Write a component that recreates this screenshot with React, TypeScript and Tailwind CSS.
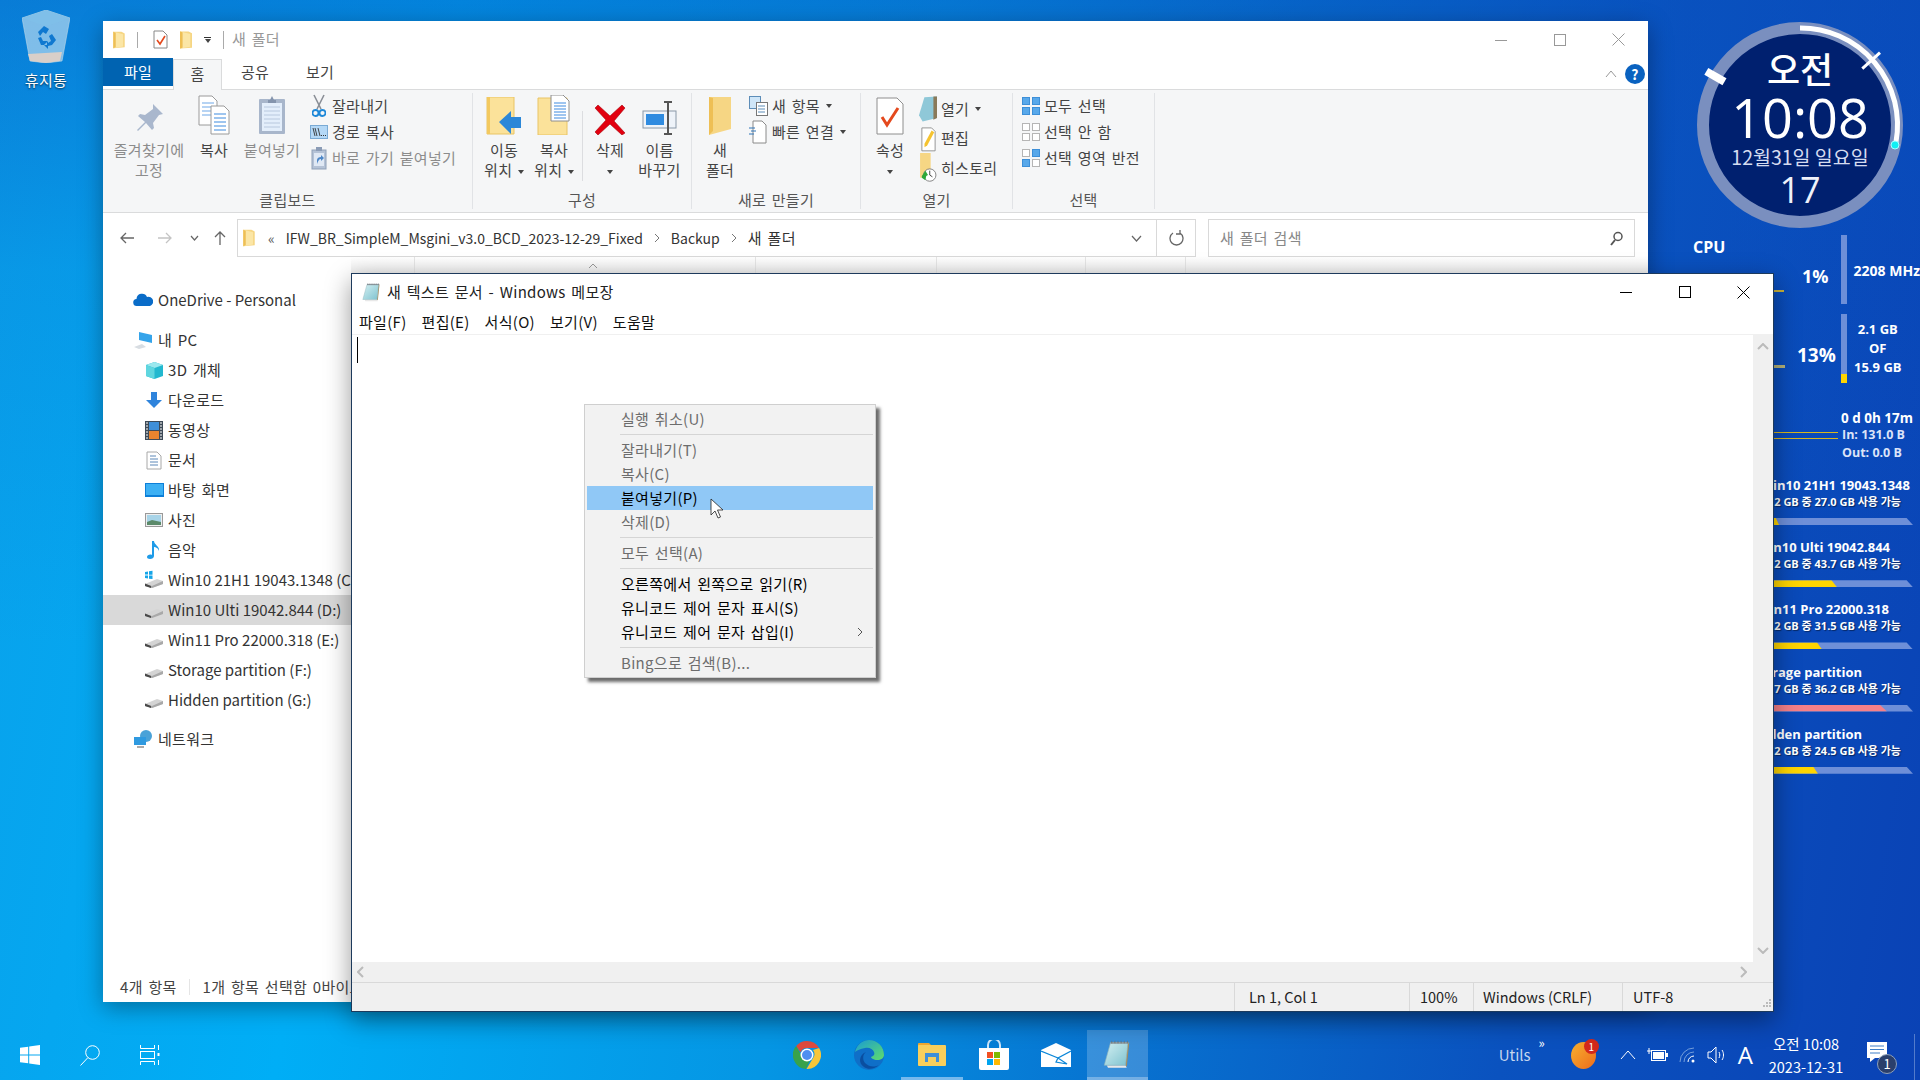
import React from 'react';

const latin = 'tracking-normal [word-spacing:normal]';

// ---------- small drawn icons ----------

function FolderIcon({ w = 14, h = 22 }: { w?: number; h?: number }) {
  return (
    <svg width={w} height={h} viewBox="0 0 14 22">
      <path d="M0 1h10l4 2v17l-14 1z" fill="#f6d684" />
      <path d="M0 1l12 3v15l-12 2z" fill="#fbe6a6" />
      <path d="M0 1v20l3-1v-18z" fill="#eebf55" />
    </svg>
  );
}

function NotepadIcon({ size = 20, id = 'np' }: { size?: number; id?: string }) {
  return (
    <svg width={size} height={size} viewBox="0 0 24 24">
      <defs>
        <linearGradient id={id} x1="0" y1="0" x2="1" y2="1">
          <stop offset="0" stopColor="#d4f0f2" />
          <stop offset="1" stopColor="#7ec2cf" />
        </linearGradient>
      </defs>
      <path d="M3 21h15l1 2H4z" fill="#e8e8e8" />
      <path d="M19 3h2l-2 19-1-1z" fill="#a88a55" />
      <path d="M6 3h14l-2 18H1z" fill={`url(#${id})`} stroke="#8fb4bc" strokeWidth="0.500" />
      <path d="M6 2.500h14.500v1.300H6z" fill="#8f9aa0" />
      <path d="M7 1.500v2M9.500 1.500v2M12 1.500v2M14.500 1.500v2M17 1.500v2M19.500 1.500v2" stroke="#6c767c" strokeWidth="0.700" />
    </svg>
  );
}

function DriveIcon({ flag = false }: { flag?: boolean }) {
  return (
    <svg width="20" height="20" viewBox="0 0 20 20">
      {flag && (
        <g fill="#16a5e8">
          <path d="M1 2l3-.5v3H1zM5 1.300l3.500-.6v4H5zM1 5.500h3v3l-3-.4zM5 5.500h3.500v3.600L5 8.700z" />
        </g>
      )}
      <path d="M1 14l12-5 6 2v3l-11 4-7-2z" fill="#d4d4d4" />
      <path d="M1 14l7 2 11-5v3l-11 4-7-2z" fill="#a9a9a9" />
      <path d="M1 13.500l6 2.500v2l-6-2z" fill="#4a4a4a" />
    </svg>
  );
}

function SmallCaret() {
  return <span className="inline-block w-0 h-0 border-x-[3px] border-x-transparent border-t-[4px] border-t-[#444] align-middle" />;
}

function PathChevron() {
  return (
    <svg className="mx-[11px]" width="6" height="10" viewBox="0 0 6 10" fill="none">
      <path d="M1 1l4 4-4 4" stroke="#777" />
    </svg>
  );
}

const pinIcon = (
  <svg width="34" height="34" viewBox="0 0 34 34">
    <path d="M21 3l10 10-4 1-6 8 1 5-2 2-6-7-8 8-1-1 8-8-7-6 2-2 5 1 8-6z" fill="#a9b7cd" />
  </svg>
);

const copyIcon = (
  <svg width="32" height="40" viewBox="0 0 32 40">
    <path d="M1 1h13l5 5v24H1z" fill="#fff" stroke="#9a9a9a" />
    <path d="M4 8h12M4 12h12M4 16h12M4 20h12" stroke="#6fa8e8" strokeWidth="1.200" />
    <path d="M13 11h13l5 5v23H13z" fill="#fff" stroke="#9a9a9a" />
    <path d="M16 19h12M16 23h12M16 27h12M16 31h12M16 35h12" stroke="#3f8be0" strokeWidth="1.200" />
  </svg>
);

const pasteIcon = (
  <svg width="28" height="40" viewBox="0 0 28 40">
    <rect x="1" y="4" width="26" height="35" rx="1" fill="#a8b6cb" />
    <rect x="4" y="8" width="20" height="28" fill="#e3eefb" />
    <path d="M6 12h16M6 16h16M6 20h16M6 24h16M6 28h16M6 32h16" stroke="#b8c8de" />
    <path d="M10 5h2l2-4 2 4h2v3h-8z" fill="#8494ad" />
  </svg>
);

const scissorsIcon = (
  <svg width="14" height="24" viewBox="0 0 14 24" fill="none">
    <path d="M2 1l7 14M12 1L5 15" stroke="#8a8f96" strokeWidth="1.600" />
    <circle cx="3.500" cy="19" r="3" stroke="#1e88d8" strokeWidth="1.800" />
    <circle cx="10.500" cy="19" r="3" stroke="#1e88d8" strokeWidth="1.800" />
  </svg>
);

const pathIcon = (
  <svg width="18" height="14" viewBox="0 0 18 14">
    <rect x="0.500" y="0.500" width="17" height="13" fill="#b4d8f6" stroke="#7aaad4" />
    <path d="M3 3l2 8M5 3l2 8M8 3l2 8" stroke="#333" strokeWidth="0.900" />
    <path d="M11 10.500h1M13 10.500h1M15 10.500h1" stroke="#333" />
  </svg>
);

const shortcutIcon = (
  <svg width="16" height="24" viewBox="0 0 16 24">
    <rect x="1" y="4" width="14" height="19" fill="#b4c2d6" stroke="#8fa0b8" />
    <rect x="5" y="1" width="6" height="4" fill="#8b9cb6" />
    <rect x="3" y="7" width="10" height="13" fill="#dfe8f4" />
    <path d="M6 18v-4c0-2 2-3 4-3v-2l3 3-3 3v-2c-2 0-3 2-4 5z" fill="#4d87c7" />
  </svg>
);

const moveToIcon = (
  <svg width="36" height="38" viewBox="0 0 36 38">
    <path d="M1 0h27v37H1z" fill="#fbe29a" stroke="#e9c465" />
    <path d="M1 0l3 0v37H1z" fill="#f3c95f" />
    <path d="M13 29l12-11v6h10v11H25v6z" transform="translate(0,-4)" fill="#2b87d8" />
  </svg>
);

const copyToIcon = (
  <svg width="34" height="40" viewBox="0 0 34 40">
    <path d="M1 3h29v37H1z" fill="#fbe29a" stroke="#e9c465" />
    <path d="M14 0h12l6 6v20H14z" fill="#fff" stroke="#8e8e8e" />
    <path d="M17 8h12M17 11h12M17 14h12M17 17h12M17 20h12M17 23h12" stroke="#3f8be0" />
  </svg>
);

const deleteIcon = (
  <svg width="32" height="32" viewBox="0 0 32 32">
    <path d="M4 2l12 11L28 2l3 3-11 13 11 12-3 2-12-11L4 32l-3-3 11-12L1 5z" fill="#e2000f" stroke="#a80008" strokeWidth="0.600" />
  </svg>
);

const renameIcon = (
  <svg width="36" height="34" viewBox="0 0 36 34" fill="none">
    <rect x="1" y="10" width="33" height="17" fill="#eef3f9" stroke="#8a98a8" />
    <rect x="4" y="13" width="18" height="11" fill="#2f8be0" />
    <path d="M26 1v32M22 1h8M22 33h8" stroke="#555" strokeWidth="2" />
  </svg>
);

const newFolderIcon = (
  <svg width="24" height="38" viewBox="0 0 24 38">
    <path d="M1 0h22v32L1 38z" fill="#f6d684" />
    <path d="M1 0l4 1v33l-4 4z" fill="#eebf55" />
  </svg>
);

const newItemIcon = (
  <svg width="19" height="20" viewBox="0 0 19 20">
    <rect x="0.500" y="0.500" width="11" height="12" fill="#cfe6f8" stroke="#5d8db8" />
    <rect x="7.500" y="6.500" width="11" height="13" fill="#fff" stroke="#777" />
    <path d="M9 10h7M9 13h7M9 16h7" stroke="#5d8db8" />
  </svg>
);

const easyAccessIcon = (
  <svg width="18" height="24" viewBox="0 0 18 24" fill="none">
    <path d="M4 1h9l4 4v18H4z" fill="#fff" stroke="#8a8a8a" />
    <path d="M0 8h6M2 11h5M0 14h5" stroke="#2f75b8" strokeWidth="1.200" />
  </svg>
);

const propsIcon = (
  <svg width="28" height="38" viewBox="0 0 28 38">
    <path d="M1 1h20l6 6v30H1z" fill="#fff" stroke="#8e8e8e" />
    <path d="M6 20l5 8 11-17" fill="none" stroke="#e4491d" strokeWidth="3" />
  </svg>
);

const openIcon = (
  <svg width="20" height="28" viewBox="0 0 20 30">
    <path d="M6 2l14-1v24l-16 4L0 22z" fill="#8fc8d8" />
    <path d="M16 1h4v24l-4 2z" fill="#8a7a5a" />
  </svg>
);

const editIcon = (
  <svg width="15" height="27" viewBox="0 0 17 30">
    <path d="M1 3h11l4 4v22H1z" fill="#fff" stroke="#8a8a8a" />
    <path d="M12 6l3 2-8 15-3 2 0-4z" fill="#f5c330" />
  </svg>
);

const historyIcon = (
  <svg width="18" height="30" viewBox="0 0 20 34">
    <path d="M1 0h12v28H1z" fill="#f6d684" />
    <circle cx="12" cy="25" r="7" fill="#fff" stroke="#777" />
    <path d="M12 20v5l3 2" stroke="#333" fill="none" />
    <path d="M3 26l4-6 3 5-2 1-1 5-4-3z" fill="#2fa83a" />
  </svg>
);

function SelectGrid({ on }: { on: boolean[] }) {
  const cls = (b: boolean) => (b ? 'bg-[#58a8ea] border-[#3d8fd8]' : 'bg-white border-[#b5b5b5]');
  return (
    <div className="grid grid-cols-2 gap-[2px] w-[18px] h-[18px]">
      {on.map((b, i) => (
        <div key={i} className={`border ${cls(b)}`} />
      ))}
    </div>
  );
}

function CaptionIcons({ color, left }: { color: string; left: string }) {
  return (
    <div className={`flex items-center ${left}`}>
      <div className="w-[59px] flex justify-center">
        <svg width="12" height="12" viewBox="0 0 12 12"><path d="M0 6.500h12" stroke={color} /></svg>
      </div>
      <div className="w-[59px] flex justify-center">
        <svg width="12" height="12" viewBox="0 0 12 12"><rect x="0.500" y="0.500" width="11" height="11" fill="none" stroke={color} /></svg>
      </div>
      <div className="w-[59px] flex justify-center">
        <svg width="13" height="13" viewBox="0 0 13 13"><path d="M0.500 0.500l12 12M12.500 0.500l-12 12" stroke={color} /></svg>
      </div>
    </div>
  );
}

// ---------- ribbon ----------

function BigButton({ icon, lines, w, dim = false }: { icon: React.ReactNode; lines: React.ReactNode[]; w: string; dim?: boolean }) {
  return (
    <div className={`flex flex-col items-center ${w}`}>
      <div className="h-[42px] flex items-end justify-center">{icon}</div>
      <div className={`mt-[5px] text-center leading-[20px] whitespace-nowrap ${dim ? 'text-[#8c8c8c]' : 'text-[#444]'}`}>
        {lines.map((l, i) => (
          <div key={i}>{l}</div>
        ))}
      </div>
    </div>
  );
}

function SmallButton({ icon, label, dim = false, caret = false, w = 'w-[18px]', h = 'h-[26px]' }: { icon: React.ReactNode; label: string; dim?: boolean; caret?: boolean; w?: string; h?: string }) {
  return (
    <div className={`flex items-center gap-[4px] whitespace-nowrap ${h} ${dim ? 'text-[#8c8c8c]' : 'text-[#444]'}`}>
      <div className={`${w} flex justify-center`}>{icon}</div>
      <span className="mr-[2px]">{label}</span>
      {caret && <SmallCaret />}
    </div>
  );
}

function RibbonGroup({ label, w, children }: { label: string; w: string; children: React.ReactNode }) {
  return (
    <div className={`flex flex-col ${w} border-r border-[#e1e3e6] my-[3px]`}>
      <div className="flex h-[95px] shrink-0">{children}</div>
      <div className="h-[20px] shrink-0 text-center leading-[24px] text-[#555]">{label}</div>
    </div>
  );
}

function Ribbon() {
  return (
    <div className="flex h-[124px] bg-[#f5f6f7] border-y border-[#dadbdc]">
      <RibbonGroup label="클립보드" w="w-[370px]">
        <BigButton w="w-[92px]" dim icon={pinIcon} lines={['즐겨찾기에', '고정']} />
        <BigButton w="w-[38px]" icon={copyIcon} lines={['복사']} />
        <BigButton w="w-[78px]" dim icon={pasteIcon} lines={['붙여넣기']} />
        <div className="flex flex-col ml-[-1px]">
          <SmallButton icon={scissorsIcon} label="잘라내기" />
          <SmallButton icon={pathIcon} label="경로 복사" />
          <SmallButton icon={shortcutIcon} dim label="바로 가기 붙여넣기" />
        </div>
      </RibbonGroup>
      <RibbonGroup label="구성" w="w-[219px]">
        <BigButton w="w-[56px] ml-[3px]" icon={moveToIcon} lines={['이동', <>위치 <SmallCaret /></>]} />
        <BigButton w="w-[44px]" icon={copyToIcon} lines={['복사', <>위치 <SmallCaret /></>]} />
        <div className="w-px h-[70px] bg-[#dcdde0] mt-[18px] ml-[6px]" />
        <BigButton w="w-[54px]" icon={deleteIcon} lines={['삭제', <SmallCaret />]} />
        <BigButton w="w-[45px]" icon={renameIcon} lines={['이름', '바꾸기']} />
      </RibbonGroup>
      <RibbonGroup label="새로 만들기" w="w-[169px]">
        <BigButton w="w-[56px]" icon={newFolderIcon} lines={['새', '폴더']} />
        <div className="flex flex-col">
          <SmallButton icon={newItemIcon} label="새 항목" caret w="w-[20px]" />
          <SmallButton icon={easyAccessIcon} label="빠른 연결" caret w="w-[20px]" />
        </div>
      </RibbonGroup>
      <RibbonGroup label="열기" w="w-[152px]">
        <BigButton w="w-[58px]" icon={propsIcon} lines={['속성', <SmallCaret />]} />
        <div className="flex flex-col mt-[1px]">
          <SmallButton h="h-[29.500px]" icon={openIcon} label="열기" caret />
          <SmallButton h="h-[29.500px]" icon={editIcon} label="편집" />
          <SmallButton h="h-[29.500px]" icon={historyIcon} label="히스토리" />
        </div>
      </RibbonGroup>
      <RibbonGroup label="선택" w="w-[142px]">
        <div className="flex flex-col pl-[9px]">
          <SmallButton icon={<SelectGrid on={[true, true, true, true]} />} label="모두 선택" />
          <SmallButton icon={<SelectGrid on={[false, false, false, false]} />} label="선택 안 함" />
          <SmallButton icon={<SelectGrid on={[false, true, true, false]} />} label="선택 영역 반전" />
        </div>
      </RibbonGroup>
    </div>
  );
}

// ---------- explorer ----------

const navItems: { label: string; icon: React.ReactNode; top?: boolean; sel?: boolean; gap?: string; en?: boolean }[] = [
  {
    label: 'OneDrive - Personal',
    top: true,
    en: true,
    gap: 'mb-[10px]',
    icon: (
      <svg width="20" height="14" viewBox="0 0 20 14">
        <path d="M4 13a3.500 3.500 0 0 1-.5-7A5.500 5.500 0 0 1 14 4a4.500 4.500 0 0 1 3 9z" fill="#0a6cc8" />
      </svg>
    ),
  },
  {
    label: '내 PC',
    top: true,
    icon: (
      <svg width="20" height="18" viewBox="0 0 20 18">
        <path d="M6 1l13 3v8L6 9z" fill="#35a4ea" />
        <path d="M1 16l8-3 4 3-7 2z" fill="#d8dde2" />
      </svg>
    ),
  },
  {
    label: '3D 개체',
    icon: (
      <svg width="19" height="19" viewBox="0 0 19 19">
        <path d="M9.500 1l8.500 3v11l-8.500 3L1 15V4z" fill="#22b8cf" />
        <path d="M1 4l8.500 3 8.500-3-8.500-3z" fill="#9be8ee" />
        <path d="M1 4l8.500 3v11L1 15z" fill="#5fd6df" />
      </svg>
    ),
  },
  {
    label: '다운로드',
    icon: (
      <svg width="18" height="18" viewBox="0 0 18 18">
        <path d="M6 1h6v8h5l-8 8-8-8h5z" fill="#2f84dc" />
      </svg>
    ),
  },
  {
    label: '동영상',
    icon: (
      <svg width="18" height="19" viewBox="0 0 18 19">
        <rect width="18" height="19" fill="#3d4a57" />
        <rect x="4" y="1" width="10" height="8" fill="#3f8fd8" />
        <rect x="4" y="10" width="10" height="8" fill="#e8842f" />
        <path d="M1 2h2M1 5h2M1 8h2M1 11h2M1 14h2M1 17h2M15 2h2M15 5h2M15 8h2M15 11h2M15 14h2M15 17h2" stroke="#fff" />
      </svg>
    ),
  },
  {
    label: '문서',
    icon: (
      <svg width="16" height="19" viewBox="0 0 16 19">
        <path d="M1 1h10l4 4v13H1z" fill="#fff" stroke="#a8a8a8" />
        <path d="M4 5h6M4 8h8M4 11h8M4 14h8" stroke="#5c88b8" />
      </svg>
    ),
  },
  {
    label: '바탕 화면',
    icon: (
      <svg width="19" height="14" viewBox="0 0 19 14">
        <rect width="19" height="14" fill="#0d7fd8" />
        <rect x="1" y="1" width="17" height="11" fill="#3cb0f4" />
      </svg>
    ),
  },
  {
    label: '사진',
    icon: (
      <svg width="18" height="14" viewBox="0 0 18 14">
        <rect x="0.500" y="0.500" width="17" height="13" fill="#eee" stroke="#999" />
        <rect x="2" y="2" width="14" height="10" fill="#a8d4e8" />
        <path d="M2 9l5-2 9 2v3H2z" fill="#5b8a6a" />
      </svg>
    ),
  },
  {
    label: '음악',
    icon: (
      <svg width="14" height="20" viewBox="0 0 14 20">
        <path d="M5 1h2c0 4 6 5 5 10-1-3-3-4-5-4v9c0 2-2 3-4 3s-3-1-3-2c0-2 3-3 5-2z" fill="#1e9be8" />
      </svg>
    ),
  },
  { label: 'Win10 21H1 19043.1348 (C:)', en: true, icon: <DriveIcon flag /> },
  { label: 'Win10 Ulti 19042.844 (D:)', en: true, icon: <DriveIcon />, sel: true },
  { label: 'Win11 Pro 22000.318 (E:)', en: true, icon: <DriveIcon /> },
  { label: 'Storage partition (F:)', en: true, icon: <DriveIcon /> },
  { label: 'Hidden partition (G:)', en: true, icon: <DriveIcon />, gap: 'mb-[9px]' },
  {
    label: '네트워크',
    top: true,
    icon: (
      <svg width="20" height="19" viewBox="0 0 20 19">
        <circle cx="13" cy="6" r="6" fill="#4aa2d8" />
        <rect x="1" y="7" width="12" height="8" fill="#2f9ae0" />
        <path d="M4 17h7" stroke="#aaa" strokeWidth="2" />
      </svg>
    ),
  },
];

function ExplorerWindow() {
  return (
    <div className="absolute left-[103px] top-[21px] w-[1545px] h-[981px] bg-white flex flex-col shadow-[0_6px_22px_rgba(0,0,0,0.35)]">
      <div className="flex items-center h-[37px] shrink-0">
        <div className="w-[16px] ml-[10px]"><FolderIcon w={12} h={18} /></div>
        <div className="w-px h-[16px] bg-[#aaa] ml-[8px]" />
        <div className="ml-[15px]">
          <svg width="15" height="19" viewBox="0 0 15 19">
            <path d="M1 1h9l4 4v13H1z" fill="#fff" stroke="#888" />
            <path d="M4 10l3 4 5-8" fill="none" stroke="#e4491d" strokeWidth="1.600" />
          </svg>
        </div>
        <div className="ml-[12px]"><FolderIcon w={12} h={20} /></div>
        <div className="ml-[12px] flex flex-col items-center gap-[1px]">
          <div className="w-[7px] h-px bg-[#333]" />
          <SmallCaret />
        </div>
        <div className="w-px h-[18px] bg-[#aaa] ml-[12px]" />
        <span className="ml-[8px] text-[#999]">새 폴더</span>
        <CaptionIcons color="#999" left="ml-auto" />
      </div>
      <div className="flex items-end h-[31px] shrink-0 text-[#444] relative">
        <div className="w-[70px] h-[28px] mb-[3px] bg-[#0063b1] text-white text-center leading-[28px]">파일</div>
        <div className="w-[49px] h-[31px] mb-[-1px] z-10 bg-[#f5f6f7] border border-b-0 border-[#dadbdc] text-center leading-[28px]">홈</div>
        <div className="w-[66px] h-[28px] mb-[3px] text-center leading-[28px]">공유</div>
        <div className="w-[64px] h-[28px] mb-[3px] text-center leading-[28px]">보기</div>
        <div className="ml-auto flex items-center h-[31px] mr-[3px] gap-[8px]">
          <svg width="12" height="8" viewBox="0 0 12 8"><path d="M1 7l5-6 5 6" fill="none" stroke="#999" /></svg>
          <div className="w-[20px] h-[20px] rounded-full bg-[#0a62c0] text-white text-[14px] font-bold text-center leading-[20px]">?</div>
        </div>
      </div>
      <Ribbon />
      <div className={`flex items-start pt-[6px] h-[44px] shrink-0 text-[14px] text-[#333] ${latin}`}>
        <div className="w-[134px] h-[38px] shrink-0 flex items-center pl-[17px]">
          <svg width="14" height="12" viewBox="0 0 14 12" fill="none"><path d="M14 6H1M6 1L1 6l5 5" stroke="#666" strokeWidth="1.300" /></svg>
          <svg className="ml-[24px]" width="14" height="12" viewBox="0 0 14 12" fill="none"><path d="M0 6h13M8 1l5 5-5 5" stroke="#c4c4c4" strokeWidth="1.300" /></svg>
          <svg className="ml-[18px]" width="9" height="6" viewBox="0 0 9 6" fill="none"><path d="M1 1l3.500 4L8 1" stroke="#666" strokeWidth="1.200" /></svg>
          <svg className="ml-[15px]" width="12" height="14" viewBox="0 0 12 14" fill="none"><path d="M6 14V1M1 6l5-5 5 5" stroke="#666" strokeWidth="1.300" /></svg>
        </div>
        <div className="w-[959px] h-[38px] shrink-0 border border-[#d9d9d9] flex items-center">
          <div className="ml-[5px]"><FolderIcon w={12} h={18} /></div>
          <span className="ml-[13px] text-[#555]">«</span>
          <span className="ml-[11px]">IFW_BR_SimpleM_Msgini_v3.0_BCD_2023-12-29_Fixed</span>
          <PathChevron />
          <span>Backup</span>
          <PathChevron />
          <span className="text-[15px] tracking-[0.3px] [word-spacing:2px]">새 폴더</span>
          <div className="ml-auto w-[39px] h-full flex items-center justify-center">
            <svg width="11" height="7" viewBox="0 0 11 7" fill="none"><path d="M1 1l4.500 5L10 1" stroke="#666" strokeWidth="1.200" /></svg>
          </div>
          <div className="w-[39px] h-full border-l border-[#d9d9d9] flex items-center justify-center">
            <svg width="15" height="17" viewBox="0 0 15 17" fill="none"><path d="M4 3a6.500 6.500 0 1 0 7 0M11 0v4h-4" stroke="#666" strokeWidth="1.300" /></svg>
          </div>
        </div>
        <div className="w-[427px] h-[38px] shrink-0 ml-[12px] border border-[#d9d9d9] flex items-center justify-between pl-[11px] pr-[11px] text-[#888]">
          <span className="text-[15px] tracking-[0.3px] [word-spacing:2px]">새 폴더 검색</span>
          <svg width="14" height="15" viewBox="0 0 14 15" fill="none"><circle cx="9" cy="5.500" r="4" stroke="#555" strokeWidth="1.500" /><path d="M6 9l-4 5" stroke="#555" strokeWidth="2" /></svg>
        </div>
      </div>
      <div className="flex flex-1 min-h-0">
        <div className="w-[248px] shrink-0 pt-[28px] text-[#333]">
          {navItems.map((n) => (
            <div key={n.label} className={`flex items-center h-[30px] whitespace-nowrap ${n.gap ?? ''} ${n.sel ? 'bg-[#d9d9d9]' : ''} ${n.top ? 'pl-[30px]' : 'pl-[41px]'}`}>
              <div className="w-[20px] flex justify-center shrink-0">{n.icon}</div>
              <span className={`${n.top ? 'ml-[5px]' : 'ml-[4px]'} ${n.en ? latin : ''}`}>{n.label}</span>
            </div>
          ))}
        </div>
        <div className="flex-1 h-[16px] flex bg-gradient-to-b from-white to-[#eeeeee]">
          <div className="w-[64px] border-r border-[#e5e5e5]" />
          <div className="w-[341px] border-r border-[#e5e5e5] pl-[173px] pt-[6px]">
            <svg width="10" height="6" viewBox="0 0 10 6" fill="none"><path d="M1 5l4-4 4 4" stroke="#999" /></svg>
          </div>
          <div className="w-[181px] border-r border-[#e5e5e5]" />
          <div className="w-[149px] border-r border-[#e5e5e5]" />
          <div className="w-[100px] border-r border-[#e5e5e5]" />
        </div>
      </div>
      <div className="flex items-center h-[30px] shrink-0 text-[#444]">
        <span className="ml-[17px]">4개 항목</span>
        <div className="w-px h-[16px] bg-[#e5e5e5] ml-[12px]" />
        <span className="ml-[13px] whitespace-nowrap">1개 항목 선택함 0바이트</span>
      </div>
    </div>
  );
}

// ---------- notepad ----------

const statusCells = [
  { w: 'w-[175px]', label: 'Ln 1, Col 1', pl: 'pl-[14px]' },
  { w: 'w-[64px]', label: '100%', pl: 'pl-[10px]' },
  { w: 'w-[149px]', label: 'Windows (CRLF)', pl: 'pl-[9px]' },
  { w: 'w-[151px]', label: 'UTF-8', pl: 'pl-[10px]' },
];

const menuRows: ({ label: string; on?: boolean; hot?: boolean; arrow?: boolean } | null)[] = [
  { label: '실행 취소(U)' },
  null,
  { label: '잘라내기(T)' },
  { label: '복사(C)' },
  { label: '붙여넣기(P)', on: true, hot: true },
  { label: '삭제(D)' },
  null,
  { label: '모두 선택(A)' },
  null,
  { label: '오른쪽에서 왼쪽으로 읽기(R)', on: true },
  { label: '유니코드 제어 문자 표시(S)', on: true },
  { label: '유니코드 제어 문자 삽입(I)', on: true, arrow: true },
  null,
  { label: 'Bing으로 검색(B)...' },
];

function ContextMenu() {
  return (
    <div className="absolute left-[232px] top-[69px] w-[292px] h-[274px] bg-[#f2f2f2] border border-[#cfcfcf] pt-[2px] px-[2px] shadow-[4px_4px_3px_rgba(60,60,60,0.75)] z-10">
      {menuRows.map((r, i) =>
        r === null ? (
          <div key={i} className="h-px my-[3px] ml-[33px] bg-[#d5d5d5]" />
        ) : (
          <div key={i} className={`flex items-center justify-between h-[24px] pl-[34px] pr-[10px] whitespace-nowrap ${r.hot ? 'bg-[#90c8f6]' : ''} ${r.on ? 'text-black' : 'text-[#6d6d6d]'}`}>
            <span>{r.label}</span>
            {r.arrow && (
              <svg width="6" height="10" viewBox="0 0 6 10" fill="none"><path d="M1 1l4 4-4 4" stroke="#555" /></svg>
            )}
          </div>
        )
      )}
    </div>
  );
}

function NotepadWindow() {
  return (
    <div className="absolute left-[351px] top-[273px] w-[1423px] h-[739px] bg-white flex flex-col border border-[#1d3a5c] shadow-[0_8px_24px_rgba(0,0,0,0.4)] z-10">
      <div className="flex items-center h-[36px] shrink-0">
        <div className="ml-[10px]"><NotepadIcon id="npTitle" /></div>
        <span className="ml-[5px] text-[#222]">새 텍스트 문서 - Windows 메모장</span>
        <CaptionIcons color="#000" left="ml-auto" />
      </div>
      <div className="flex items-center h-[25px] shrink-0 pl-[7px] gap-[15px] text-[#111] border-b border-[#f0f0f0]">
        <span>파일(F)</span>
        <span>편집(E)</span>
        <span>서식(O)</span>
        <span>보기(V)</span>
        <span>도움말</span>
      </div>
      <div className="flex flex-1 min-h-0 relative">
        <div className="flex-1 pl-[5px] pt-[2px]">
          <div className="w-px h-[26px] bg-black" />
        </div>
        <div className="w-[20px] bg-[#f0f0f0] flex flex-col items-center justify-between py-[8px]">
          <svg width="12" height="7" viewBox="0 0 12 7" fill="none"><path d="M1 6l5-5 5 5" stroke="#bbb" strokeWidth="2" /></svg>
          <svg width="12" height="7" viewBox="0 0 12 7" fill="none"><path d="M1 1l5 5 5-5" stroke="#bbb" strokeWidth="2" /></svg>
        </div>
        <ContextMenu />
        <svg className="absolute left-[358px] top-[163px] z-20" width="14" height="21" viewBox="0 0 14 21">
          <path d="M1 1v16l4-4 3 7 2.500-1-3-7h5.500z" fill="#fff" stroke="#222" strokeWidth="0.800" />
        </svg>
      </div>
      <div className="flex items-center justify-between h-[20px] shrink-0 bg-[#f0f0f0] pl-[5px] pr-[26px]">
        <svg width="7" height="12" viewBox="0 0 7 12" fill="none"><path d="M6 1L1 6l5 5" stroke="#bbb" strokeWidth="2" /></svg>
        <svg width="7" height="12" viewBox="0 0 7 12" fill="none"><path d="M1 1l5 5-5 5" stroke="#bbb" strokeWidth="2" /></svg>
      </div>
      <div className={`flex items-center justify-end h-[29px] shrink-0 bg-[#f0f0f0] border-t border-[#d9d9d9] text-[14.5px] text-[#222] relative ${latin}`}>
        {statusCells.map((c) => (
          <div key={c.label} className={`${c.w} ${c.pl} h-full border-l border-[#d9d9d9] flex items-center whitespace-nowrap`}>{c.label}</div>
        ))}
        <svg className="absolute right-[1px] bottom-[1px]" width="12" height="12" viewBox="0 0 12 12" fill="#bbb">
          <rect x="9" y="1" width="2" height="2" /><rect x="6" y="4" width="2" height="2" /><rect x="9" y="4" width="2" height="2" />
          <rect x="3" y="7" width="2" height="2" /><rect x="6" y="7" width="2" height="2" /><rect x="9" y="7" width="2" height="2" />
        </svg>
      </div>
    </div>
  );
}

// ---------- desktop widgets ----------

function ClockGauge() {
  return (
    <div className={`absolute left-[1695px] top-[20px] w-[210px] h-[210px] text-white ${latin}`}>
      <svg className="absolute inset-0" width="210" height="210" viewBox="0 0 210 210" fill="none">
        <circle cx="105" cy="105" r="97" fill="#00206f" stroke="#7a8fbf" strokeWidth="12" />
        <path d="M105 8A97 97 0 0 1 201 122" stroke="#fff" strokeWidth="5" />
        <path d="M29.500 61.800L11.300 51.400" stroke="#fff" strokeWidth="8" />
        <path d="M167.300 48.700L185 32.600" stroke="#fff" strokeWidth="3" />
        <circle cx="200" cy="125" r="4" fill="#10f0f4" stroke="#a8ffff" />
      </svg>
      <div className="relative flex flex-col items-center pt-[28px]">
        <div className="text-[36px] leading-[40px] font-medium">오전</div>
        <div className="text-[54px] leading-[50px] mt-[4px] font-['Open_Sans',sans-serif]">10:08</div>
        <div className="text-[19.5px] leading-[24px] text-[#d5dcf0] mt-[3px]">12월31일 일요일</div>
        <div className="text-[36px] leading-[40px] text-[#eef1fa] mt-[1px] font-['Open_Sans',sans-serif]">17</div>
      </div>
    </div>
  );
}

const drives = [
  { title: 'Win10 21H1 19043.1348', sub: '118.2 GB 중  27.0 GB 사용 가능', used: 'w-[79px]', color: 'bg-[#ffd500]', pr: 'pr-[3px]' },
  { title: 'Win10 Ulti 19042.844', sub: '118.2 GB 중 43.7 GB 사용 가능', used: 'w-[137px]', color: 'bg-[#ffd500]', pr: 'pr-[23px]' },
  { title: 'Win11 Pro 22000.318', sub: '118.2 GB 중  31.5 GB 사용 가능', used: 'w-[122px]', color: 'bg-[#ffd500]', pr: 'pr-[24px]' },
  { title: 'Storage partition', sub: '465.7 GB 중 36.2 GB 사용 가능', used: 'w-[187px]', color: 'bg-[#f58088]', pr: 'pr-[51px]' },
  { title: 'Hidden partition', sub: '118.2 GB 중  24.5 GB 사용 가능', used: 'w-[118px]', color: 'bg-[#ffd500]', pr: 'pr-[51px]' },
];

function SystemPanel() {
  const sysText = `font-['Open_Sans','Noto_Sans_CJK_KR',sans-serif] font-bold text-white ${latin}`;
  return (
    <>
      <div className={`absolute left-[1693px] top-[235px] w-[227px] h-[160px] ${sysText}`}>
        <div className="absolute left-0 top-0 text-[16px]">CPU</div>
        <div className="flex items-center h-[69px] pl-[109px]">
          <span className="w-[30px] text-[18px] mt-[14px]">1%</span>
          <div className="w-[6px] h-[69px] ml-[9px] bg-[#6e8fd8]" />
          <span className="ml-[7px] text-[14px] whitespace-nowrap mt-[1px]">2208 MHz</span>
        </div>
        <div className="flex items-center h-[69px] pl-[104px] mt-[10px]">
          <span className="w-[37px] text-[19px] mt-[13px]">13%</span>
          <div className="w-[6px] h-[69px] ml-[7px] bg-[#6e8fd8] flex items-end">
            <div className="w-full h-[9px] bg-[#ffd500]" />
          </div>
          <div className="ml-[7px] text-[13px] leading-[19px] text-center">
            <div>2.1 GB</div>
            <div>OF</div>
            <div>15.9 GB</div>
          </div>
        </div>
      </div>
      <div className="absolute left-[1774px] top-[290px] w-[10px] h-[2px] bg-[#c8b13a]" />
      <div className="absolute left-[1774px] top-[365px] w-[11px] h-[3px] bg-[#b5b37a]" />
      <div className={`absolute left-[1774px] top-[409px] w-[146px] text-[12.5px] ${sysText}`}>
        <div className="flex justify-end pr-[7px] h-[18px] items-center text-[13.5px]">0 d 0h 17m</div>
        <div className="flex items-center h-[17px]">
          <div className="w-[64px] h-[7px] border-y border-[#d8b620] shrink-0" />
          <span className="ml-[4px] text-[#dce4f8]">In: 131.0 B</span>
        </div>
        <div className="pl-[68px] h-[17px] leading-[17px] text-[#dce4f8]">Out: 0.0 B</div>
      </div>
      <div className={`absolute left-[1700px] top-[476px] w-[213px] flex flex-col gap-[1.700px] ${sysText}`}>
        {drives.map((d) => (
          <div key={d.title} className="h-[60.500px] flex flex-col items-end">
            <div className={`text-[13px] leading-[18px] whitespace-nowrap ${d.pr}`}>{d.title}</div>
            <div className="text-[11px] leading-[16px] whitespace-nowrap pr-[12px] [text-shadow:1px_1px_1px_rgba(0,0,0,0.45)]">{d.sub}</div>
            <div className="w-[213px] mt-[8px] h-[7px] bg-[#6e8fd8] [clip-path:polygon(0_0,97%_0,100%_100%,0_100%)] shrink-0">
              <div className={`h-full ${d.used} ${d.color} [clip-path:polygon(0_0,96%_0,100%_100%,0_100%)]`} />
            </div>
          </div>
        ))}
      </div>
    </>
  );
}

function RecycleBin() {
  return (
    <div className="absolute left-[14px] top-[10px] w-[64px] flex flex-col items-center text-white [text-shadow:0_1px_2px_rgba(0,0,0,0.7)]">
      <svg width="48" height="53" viewBox="0 0 48 53">
        <path d="M0 8L24 0l24 8-8 43-16 2-16-2z" fill="#cfe6f4" fillOpacity="0.6" stroke="#bcd8e8" strokeWidth="0.600" />
        <path d="M0 8L24 0l24 8-20 7-8 0z" fill="#7fbfe8" fillOpacity="0.8" />
        <path d="M6 44l34-2-2 9-14 2-16-2z" fill="#d9cfc9" />
        <path d="M16 22l6-6 5 3-3 5-3-2-3 4zM16 28l3 7h6v-4h-4l-2-4zM27 26l3-2 4 6-4 5-4 1v3l-4-4 4-4v2l3-2z" fill="#0f78d0" />
      </svg>
      <span className="mt-[7px] leading-[20px]">휴지통</span>
    </div>
  );
}

// ---------- taskbar ----------

const chromeIcon = (
  <svg width="28" height="28" viewBox="0 0 28 28">
    <path d="M14 0a14 14 0 0 1 12.100 7H14a7 7 0 0 0-6.500 4.300L3.100 5.100A14 14 0 0 1 14 0z" fill="#dd4b3e" />
    <path d="M26.100 7A14 14 0 0 1 13.500 28l6.300-10.500A7 7 0 0 0 20 9z" fill="#f6c63a" />
    <path d="M3.100 5.100L9 15.500a7 7 0 0 0 8 3.500l-4 9A14 14 0 0 1 3.100 5.100z" fill="#38a24b" />
    <circle cx="14" cy="14" r="6.500" fill="#fff" />
    <circle cx="14" cy="14" r="5" fill="#4f8ef0" />
  </svg>
);

const edgeIcon = (
  <svg width="30" height="30" viewBox="0 0 30 30">
    <defs>
      <linearGradient id="edgeTop" x1="0" y1="0" x2="1" y2="1">
        <stop offset="0" stopColor="#1a9ed8" />
        <stop offset="1" stopColor="#5fdc6a" />
      </linearGradient>
    </defs>
    <circle cx="15" cy="15" r="15" fill="#0f6fc8" />
    <path d="M1 12C3 4 9 0 15 0c9 0 15 7 15 15 0 3-3 5-7 5-3 0-6-2-6-3 3-1 4-3 3-5-1-3-5-5-9-4-5 1-8 2-10 4z" fill="url(#edgeTop)" />
    <path d="M12 12c-3 2-4 7-1 11 3 3 8 5 14 2-4 4-11 5-15 2-6-4-5-12 2-15z" fill="#0a4ea0" />
  </svg>
);

const explorerIcon = (
  <svg width="28" height="24" viewBox="0 0 28 24">
    <path d="M0 2a1 1 0 0 1 1-1h10l3 3H0z" fill="#f0a830" />
    <rect y="3" width="28" height="21" rx="1" fill="#f8cf5c" />
    <path d="M7 11h14v9H7z" fill="#3f8fd8" />
    <path d="M10 15h8v5h-8z" fill="#f8cf5c" />
  </svg>
);

const storeIcon = (
  <svg width="30" height="30" viewBox="0 0 30 30">
    <path d="M9 9V5a6 6 0 0 1 12 0v4" fill="none" stroke="#cfe6f8" strokeWidth="2" />
    <path d="M0 8h30v20a2 2 0 0 1-2 2H2a2 2 0 0 1-2-2z" fill="#fff" />
    <rect x="8" y="12" width="6" height="6" fill="#f25022" />
    <rect x="15" y="12" width="6" height="6" fill="#7fba00" />
    <rect x="8" y="19" width="6" height="6" fill="#00a4ef" />
    <rect x="15" y="19" width="6" height="6" fill="#ffb900" />
  </svg>
);

const mailIcon = (
  <svg width="30" height="24" viewBox="0 0 30 24">
    <path d="M0 7L15 0l15 7v17H0z" fill="#fff" />
    <path d="M0 8l17 7 9 6-11-2 2-4L30 8" fill="none" stroke="#0a86d8" strokeWidth="1.200" />
  </svg>
);

const taskIcons = [chromeIcon, edgeIcon, explorerIcon, storeIcon, mailIcon];

function Taskbar() {
  return (
    <div className={`absolute left-0 right-0 bottom-0 h-[50px] flex items-center text-white ${latin}`}>
      <div className="flex items-center pl-[20px]">
        <svg width="20" height="20" viewBox="0 0 20 20" fill="#fff">
          <path d="M0 2.800L8.200 1.700v7.900H0zM9.200 1.500L20 0v9.600H9.200zM0 10.400h8.200v7.900L0 17.200zM9.200 10.400H20V20L9.200 18.500z" />
        </svg>
        <svg className="ml-[40px]" width="20" height="21" viewBox="0 0 20 21" fill="none">
          <circle cx="12.500" cy="7.500" r="6.800" stroke="#fff" />
          <path d="M8 12.500L0.500 20.500" stroke="#fff" />
        </svg>
        <svg className="ml-[40px]" width="20" height="20" viewBox="0 0 20 20" fill="none" stroke="#fff">
          <path d="M0.500 0v3.500h14V0M0.500 20v-3.500h14V20" />
          <rect x="0.500" y="6.500" width="14" height="7" />
          <path d="M18.500 0v5M18.500 15v5" />
          <rect x="17.500" y="8" width="2" height="3" fill="#fff" stroke="none" />
        </svg>
      </div>
      <div className="flex items-center h-full ml-[616px]">
        {taskIcons.map((icon, i) => (
          <div key={i} className={`w-[62.300px] h-full flex items-center justify-center ${i === 2 ? 'border-b-[3px] border-[#76b9ed]' : ''}`}>{icon}</div>
        ))}
        <div className="w-[61px] h-full flex items-center justify-center bg-white/20 border-b-[3px] border-white/30">
          <NotepadIcon size={30} id="npTask" />
        </div>
      </div>
      <div className="flex items-center ml-auto h-full relative">
        <span className="text-[15px] text-[#c5d6ee] mt-[1px]">Utils</span>
        <span className="text-[13px] mb-[26px] ml-[8px] leading-none">»</span>
        <div className="relative ml-[26px] w-[25px] h-[27px]">
          <div className="w-[25px] h-[27px] rounded-[50%] bg-gradient-to-br from-[#f5b030] to-[#ee6a1a]" />
          <div className="absolute right-[-3px] top-[-3px] w-[15px] h-[15px] rounded-full bg-[#d4281c] text-[10px] text-center leading-[15px]">1</div>
        </div>
        <svg className="ml-[24px]" width="16" height="10" viewBox="0 0 16 10" fill="none"><path d="M1 9l7-8 7 8" stroke="#fff" /></svg>
        <svg className="ml-[11px]" width="21" height="14" viewBox="0 0 21 14">
          <rect x="4.500" y="2.500" width="14" height="10" fill="none" stroke="#fff" />
          <rect x="6" y="4" width="11" height="7" fill="#fff" />
          <rect x="19" y="5" width="2" height="4" fill="#fff" />
          <path d="M0 3h4M2 0v6" stroke="#fff" />
        </svg>
        <svg className="ml-[11px]" width="16" height="16" viewBox="0 0 16 16" fill="none" stroke="#9fc0e8">
          <path d="M1 15a14 14 0 0 1 14-14M5 15a10 10 0 0 1 10-10" strokeOpacity="0.7" />
          <path d="M9 15a6 6 0 0 1 6-6" stroke="#fff" />
          <circle cx="14" cy="14" r="1.500" fill="#fff" stroke="none" />
        </svg>
        <svg className="ml-[12px]" width="20" height="18" viewBox="0 0 20 18" fill="none" stroke="#fff">
          <path d="M1 6h3l5-5v16l-5-5H1z" />
          <path d="M12 6c1 2 1 4 0 6M15 4c2 3 2 7 0 10" />
        </svg>
        <span className="ml-[11px] text-[24px] leading-none font-['Open_Sans',sans-serif]">A</span>
        <div className="ml-[15px] w-[76px] flex flex-col items-center text-[14.5px] leading-[23px] whitespace-nowrap">
          <span>오전 10:08</span>
          <span>2023-12-31</span>
        </div>
        <div className="relative ml-[23px] mr-[32px] w-[21px] h-[24px] mb-[3px]">
          <svg width="21" height="24" viewBox="0 0 21 24">
            <path d="M0 0h20v16H8l-5 4v-4H0z" fill="#fff" />
            <path d="M3 4h14M3 7.500h14M3 11h10" stroke="#3f7fc8" />
          </svg>
          <div className="absolute right-[-9px] bottom-[-8px] w-[20px] h-[20px] rounded-full bg-[#2a3f6b] border border-[#8fa0b8] text-[13px] text-center leading-[18px]">1</div>
        </div>
        <div className="absolute right-[5px] top-[4px] bottom-0 w-px bg-white/30" />
      </div>
    </div>
  );
}

export default function App() {
  return (
    <div className="relative w-[1920px] h-[1080px] overflow-hidden text-[15px] tracking-[0.3px] [word-spacing:2px] font-['Noto_Sans_CJK_KR','Noto_Sans',sans-serif] bg-[linear-gradient(180deg,rgba(8,80,190,0.45)_0%,rgba(8,80,190,0.12)_25%,rgba(8,80,190,0)_60%),linear-gradient(100deg,#0aa0ea_0%,#00aef6_22%,#0596e4_45%,#0772d0_62%,#0a52bf_80%,#0a42b5_100%)]">
      <RecycleBin />
      <ClockGauge />
      <SystemPanel />
      <ExplorerWindow />
      <NotepadWindow />
      <Taskbar />
    </div>
  );
}
